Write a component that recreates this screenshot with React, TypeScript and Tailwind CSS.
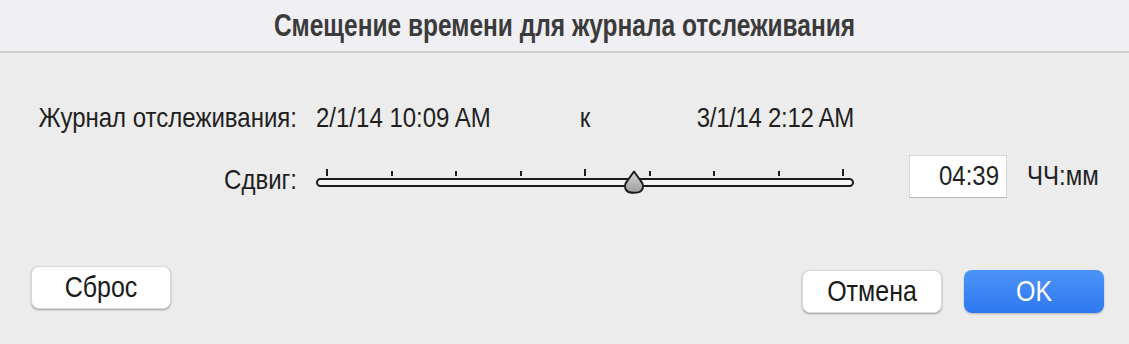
const TICKS = [true, false, false, false, true, false, false, false, true];

const Thumb = () => (
	<svg width="22" height="24" viewBox="0 0 22 24" className="absolute left-[307px] top-[2px]">
		<defs>
			<linearGradient id="thumbFill" x1="0" y1="0" x2="0" y2="1">
				<stop offset="0" stopColor="#d6d6d6" />
				<stop offset="1" stopColor="#9c9c9c" />
			</linearGradient>
		</defs>
		<path
			d="M11 1.5 L17.5 10.5 C20.5 14 20.5 18 18.5 20.5 C17 22.3 14 22.8 11 22.8 C8 22.8 5 22.3 3.5 20.5 C1.5 18 1.5 14 4.5 10.5 Z"
			fill="url(#thumbFill)"
			stroke="#1c1c1c"
			strokeWidth="2"
			strokeLinejoin="round"
		/>
	</svg>
);

const Slider = () => {
	return (
		<div className="relative w-[538px] h-[26px]">
			<div className="flex justify-between items-end px-[10px] h-[8px]">
				{TICKS.map((major, index) => (
					<span
						key={index}
						className={
							major
								? "block w-[2px] h-[7px] bg-[#1c1c1c]"
								: "block w-[2px] h-[5px] bg-[#1c1c1c]"
						}
					></span>
				))}
			</div>
			<div className="mt-[2px] h-[9px] rounded-full border-2 border-[#1c1c1c] bg-[#f4f4f4]"></div>
			<Thumb />
		</div>
	);
};

const Button = ({ label, primary }: { label: string; primary?: boolean }) => {
	return (
		<button
			className={
				primary
					? "w-[140px] h-[43px] rounded-[8px] bg-gradient-to-b from-[#4c93f8] to-[#2f78ef] text-white text-[25px] shadow-[0_1px_2px_rgba(0,0,0,0.25)]"
					: "w-[140px] h-[43px] rounded-[8px] bg-white text-[#1a1a1a] text-[25px] shadow-[0_1px_2px_rgba(0,0,0,0.35)] border border-[#dadada]"
			}
		>
			<span className="inline-block scale-y-[1.17]">{label}</span>
		</button>
	);
};

export default function App() {
	return (
		<div className="w-[1129px] h-[344px] bg-[#ececec] text-[#1f1f1f] font-['Liberation_Sans',Arial,sans-serif] overflow-hidden">
			<div className="h-[53px] bg-[#f0eff4] border-b-2 border-[#cfcfcf] flex items-center justify-center">
				<h1 className="text-[24.5px] font-bold text-[#3b3b3b] scale-y-[1.28] mt-[2px]">
					Смещение времени для журнала отслеживания
				</h1>
			</div>

			<div className="mt-[49px] flex items-center h-[32px] text-[24px]">
				<div className="w-[297px] text-right scale-y-[1.17]">Журнал отслеживания:</div>
				<div className="ml-[19px] w-[538px] grid grid-cols-[1fr_1fr_1fr] items-center">
					<span className="scale-y-[1.17]">2/1/14 10:09 AM</span>
					<span className="text-center scale-y-[1.17]">к</span>
					<span className="text-right scale-y-[1.17] tracking-[-0.3px]">3/1/14 2:12 AM</span>
				</div>
			</div>

			<div className="mt-[20px] flex items-center text-[24px]">
				<div className="w-[297px] mt-[8px] text-right scale-y-[1.17]">Сдвиг:</div>
				<div className="ml-[19px] self-start mt-[14px]">
					<Slider />
				</div>
				<div className="ml-[55px] w-[98px] h-[43px] bg-white border border-[#d6d6d6] border-b-[#b5b5b5] flex items-center justify-end pr-[7px]">
					<span className="inline-block scale-y-[1.17]">04:39</span>
				</div>
				<div className="ml-[20px] scale-y-[1.17]">ЧЧ:мм</div>
			</div>

			<div className="mt-[68px] flex items-start pr-[25px] pl-[31px]">
				<Button label="Сброс" />
				<div className="ml-auto mt-[4px] flex gap-[22px]">
					<Button label="Отмена" />
					<Button label="OK" primary />
				</div>
			</div>
		</div>
	);
}
